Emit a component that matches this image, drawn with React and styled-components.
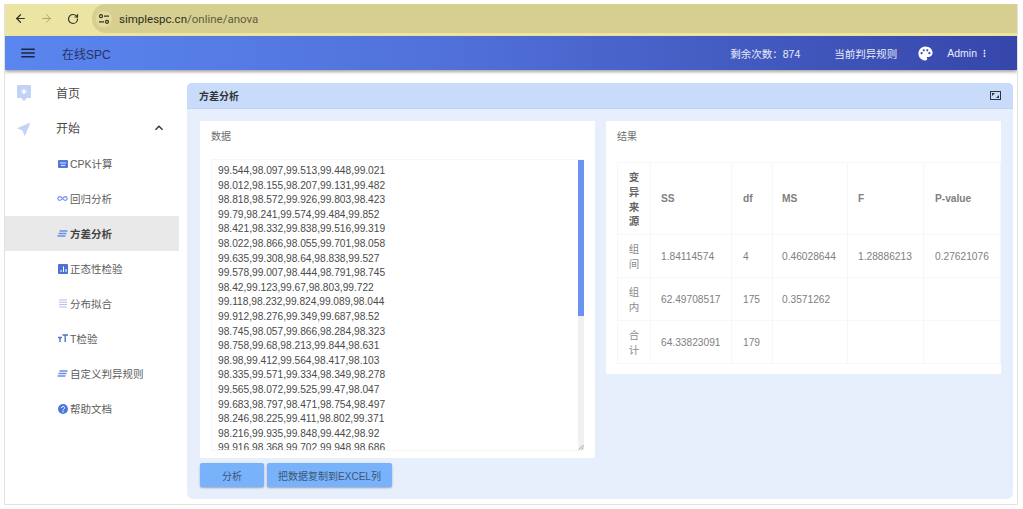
import styled, { createGlobalStyle } from "styled-components";
import { ArrowLeft, ArrowRight, RotateCw, Infinity as InfinityIcon } from "lucide-react";
import { MdMenu, MdPalette, MdMoreVert, MdExpandLess, MdNavigation } from "react-icons/md";

const GlobalStyle = createGlobalStyle`
  html, body {
    margin: 0;
    padding: 0;
    background: #ffffff;
    font-family: "Liberation Sans", "Noto Sans CJK SC", sans-serif;
  }
`;

const Frame = styled.div`
  box-sizing: border-box;
  width: 1014px;
  height: 501px;
  margin: 4px 0 0 4px;
  border: 1px solid #e2e2e2;
  border-top: 0;
  display: flex;
  flex-direction: column;
  overflow: hidden;
`;

const BrowserBar = styled.div`
  height: 32px;
  flex: none;
  box-sizing: border-box;
  background: #ece4a2;
  border-bottom: 3px solid #eee6a0;
  display: flex;
  align-items: center;
  padding-left: 2px;
  color: #3c3c30;
`;

const NavButton = styled.span`
  width: 26.5px;
  display: flex;
  justify-content: center;
  color: ${(p) => (p.$muted ? "#9c9878" : "#33332a")};
`;

const AddressPill = styled.div`
  flex: 1;
  height: 29px;
  margin-left: 5.5px;
  border-radius: 14px 0 0 14px;
  background: #d6cf90;
  display: flex;
  align-items: center;
  gap: 7px;
  padding-left: 4px;
  font-family: "Roboto", sans-serif;
  font-size: 11.5px;
  color: #5f5c45;
`;

const SiteIcon = styled.span`
  width: 16px;
  height: 16px;
  border-radius: 50%;
  background: #e4dc9c;
  display: flex;
  align-items: center;
  justify-content: center;
  color: #33332a;
`;

const Host = styled.span`
  color: #2e2d22;
`;

const Header = styled.header`
  height: 34px;
  flex: none;
  background: linear-gradient(90deg, #5a86f0 0%, #5070d8 45%, #3646aa 100%);
  box-shadow: 0 2px 3px rgba(60, 60, 60, 0.45);
  display: flex;
  align-items: center;
  color: #e8ecfa;
  font-size: 10.5px;
  position: relative;
  z-index: 1;
`;

const MenuButton = styled.span`
  width: 46px;
  padding-left: 14px;
  box-sizing: border-box;
  display: flex;
  color: #1d2540;
`;

const Brand = styled.span`
  margin-left: 11px;
  font-size: 12px;
  color: #26335f;
`;

const HeaderRight = styled.div`
  margin-left: auto;
  display: flex;
  align-items: center;
  padding-right: 27px;
`;

const Count = styled.span`
  margin-right: 34px;
`;

const Rule = styled.span`
  margin-right: 20px;
`;

const Admin = styled.span`
  margin-left: 13px;
  display: flex;
  align-items: center;
  gap: 2px;
`;

const Content = styled.div`
  flex: 1;
  display: flex;
  min-height: 0;
`;

const Sidebar = styled.nav`
  width: 174px;
  flex: none;
  padding-top: 5px;
  margin-right: 8px;
`;

const NavItem = styled.div`
  height: 35px;
  display: flex;
  align-items: center;
  padding-left: 12px;
  font-size: 12px;
  color: #4a4a4a;
`;

const OpenItem = styled(NavItem)`
  margin-bottom: 1px;
`;

const NavIcon = styled.span`
  width: 39px;
  display: flex;
  color: #c3d3f8;
`;

const Chevron = styled.span`
  margin-left: 71px;
  display: flex;
  color: #333333;
`;

const SubItem = styled.div`
  height: 35px;
  display: flex;
  align-items: center;
  padding-left: 52px;
  gap: 2px;
  font-size: 10.5px;
  color: ${(p) => (p.$active ? "#444444" : "#5c5c5c")};
  background: ${(p) => (p.$active ? "#e9e9e9" : "transparent")};
  font-weight: ${(p) => (p.$active ? "bold" : "normal")};
`;

const SubIcon = styled.span`
  width: 11px;
  height: 11px;
  display: flex;
  align-items: center;
  justify-content: center;
  color: #6a8ee6;
`;

const Panel = styled.main`
  width: 826px;
  height: 416px;
  margin-top: 13px;
  background: #e7effd;
  border-radius: 5px 5px 6px 6px;
  overflow: hidden;
`;

const PanelHeader = styled.div`
  height: 26px;
  box-sizing: border-box;
  background: #c9dbfa;
  border-bottom: 1px solid #bfd2f5;
  display: flex;
  align-items: center;
  justify-content: space-between;
  padding: 0 12px;
  font-size: 10px;
  font-weight: bold;
  color: #333333;
`;

const PanelBody = styled.div`
  display: grid;
  grid-template-columns: 395px 395px;
  column-gap: 11px;
  padding: 12px 12px 0 13px;
  align-items: start;
`;

const DataColumn = styled.div`
  display: flex;
  flex-direction: column;
`;

const Card = styled.section`
  background: #ffffff;
  box-sizing: border-box;
  padding: 10px 11px 7px;
  height: ${(p) => p.$height}px;
  display: flex;
  flex-direction: column;
`;

const CardTitle = styled.div`
  font-size: 10px;
  line-height: 12px;
  height: ${(p) => p.$height}px;
  color: #6c6c6c;
`;

const DataBox = styled.div`
  flex: 1;
  min-height: 0;
  border: 1px solid #f6f6f6;
  border-right: 0;
  position: relative;
  overflow: hidden;
  padding: 4px 0 0 6px;
  font-size: 10.2px;
  line-height: 14.6px;
  color: #4a4a4a;
`;

const ScrollTrack = styled.div`
  position: absolute;
  top: 0;
  right: 0;
  bottom: 0;
  width: 6px;
  background: #f0f0f0;
`;

const ScrollThumb = styled.div`
  width: 6px;
  height: 156px;
  background: #6b93ee;
`;

const ResizeGrip = styled.svg`
  position: absolute;
  right: 0;
  bottom: 0;
  width: 6px;
  height: 6px;
`;

const Actions = styled.div`
  display: flex;
  gap: 3px;
  margin-top: 5px;
`;

const Button = styled.button`
  height: 24px;
  width: ${(p) => p.$width}px;
  border: 0;
  padding: 0;
  border-radius: 2px;
  background: #78b2fb;
  box-shadow: 0 1px 2px rgba(60, 70, 90, 0.45);
  font-family: inherit;
  font-size: 10px;
  color: #3d5673;
`;

const ResultTable = styled.table`
  border-collapse: collapse;
  table-layout: fixed;
  width: 383px;
  font-size: 10.2px;
  color: #808080;
  td, th {
    border: 1px solid #f7f7f7;
    padding: 0 0 0 11px;
    text-align: left;
  }
  td:nth-child(2), th:nth-child(2), td:nth-child(5), th:nth-child(5) {
    padding-left: 10px;
  }
  td:nth-child(4), th:nth-child(4) {
    padding-left: 9px;
  }
  th {
    font-weight: bold;
  }
`;

const SourceCell = styled.td`
  && {
    padding: 2px 0 0;
    text-align: center;
    font-size: 10.5px;
    font-weight: ${(p) => (p.$head ? "bold" : "normal")};
    color: ${(p) => (p.$head ? "#666666" : "#8c8c8c")};
    line-height: 14.7px;
  }
`;

const Row = styled.tr`
  height: ${(p) => p.$height}px;
`;

const dataLines = [
  "99.544,98.097,99.513,99.448,99.021",
  "98.012,98.155,98.207,99.131,99.482",
  "98.818,98.572,99.926,99.803,98.423",
  "99.79,98.241,99.574,99.484,99.852",
  "98.421,98.332,99.838,99.516,99.319",
  "98.022,98.866,98.055,99.701,98.058",
  "99.635,99.308,98.64,98.838,99.527",
  "99.578,99.007,98.444,98.791,98.745",
  "98.42,99.123,99.67,98.803,99.722",
  "99.118,98.232,99.824,99.089,98.044",
  "99.912,98.276,99.349,99.687,98.52",
  "98.745,98.057,99.866,98.284,98.323",
  "98.758,99.68,98.213,99.844,98.631",
  "98.98,99.412,99.564,98.417,98.103",
  "98.335,99.571,99.334,98.349,98.278",
  "99.565,98.072,99.525,99.47,98.047",
  "99.683,98.797,98.471,98.754,98.497",
  "98.246,98.225,99.411,98.802,99.371",
  "98.216,99.935,99.848,99.442,98.92",
  "99.916,98.368,99.702,99.948,98.686",
];

const rows = [
  { source: ["组", "间"], values: ["1.84114574", "4", "0.46028644", "1.28886213", "0.27621076"] },
  { source: ["组", "内"], values: ["62.49708517", "175", "0.3571262", "", ""] },
  { source: ["合", "计"], values: ["64.33823091", "179", "", "", ""] },
];

const columns = [33, 81, 41, 75, 76, 77];

function Stacked({ chars }) {
  return chars.map((c) => <div key={c}>{c}</div>);
}

function TuneIcon() {
  return (
    <svg width="12" height="10" viewBox="0 0 12 10" fill="none" stroke="#33332a" strokeWidth="1.2">
      <circle cx="3" cy="2.2" r="1.5" />
      <path d="M6 2.2h5M1 7.8h5" />
      <circle cx="9" cy="7.8" r="1.5" />
    </svg>
  );
}

function HomeIcon() {
  return (
    <svg width="14" height="16" viewBox="0 0 14 16">
      <path d="M1 0h12a1 1 0 0 1 1 1v11a1 1 0 0 1-1 1h-3l-3 3-3-3H1a1 1 0 0 1-1-1V1a1 1 0 0 1 1-1z" fill="#c3d3f8" />
      <path d="M7 4v5M4.5 6.5h5" stroke="#fff" strokeWidth="1.6" />
    </svg>
  );
}

function KeyboardIcon() {
  return (
    <svg width="10" height="8" viewBox="0 0 10 8">
      <rect width="10" height="8" rx="1" fill="#5579d6" />
      <path d="M2 3h6M3 5.5h4" stroke="#dfe8fb" strokeWidth="1" />
    </svg>
  );
}

function SlantLines() {
  return (
    <svg width="11" height="7" viewBox="0 0 11 7">
      <path d="M2.5 1H10.5M1.5 3.5H9.5M.5 6H8.5" stroke="#6a8ee6" strokeWidth="1.3" />
    </svg>
  );
}

function ChartIcon() {
  return (
    <svg width="10" height="10" viewBox="0 0 10 10">
      <rect width="10" height="10" rx="1" fill="#4c72d6" />
      <path d="M3 8V6M5.5 8V2.5M8 8V5" stroke="#fff" strokeWidth="1" />
    </svg>
  );
}

function ListIcon() {
  return (
    <svg width="10" height="9" viewBox="0 0 10 9">
      <path d="M1 1h8M1 3.3h8M1 5.6h8M1 8h8" stroke="#aebfec" strokeWidth="1" />
    </svg>
  );
}

function FontSizeIcon() {
  return (
    <svg width="10" height="9" viewBox="0 0 10 9">
      <path d="M0 3.5h4M2 3.5V8M4.5 1H10M7.2 1v7" stroke="#4c72c9" strokeWidth="1.4" fill="none" />
    </svg>
  );
}

function HelpIcon() {
  return (
    <svg width="10" height="10" viewBox="0 0 10 10">
      <circle cx="5" cy="5" r="5" fill="#4c78dc" />
      <path d="M3.5 4a1.5 1.5 0 1 1 2.3 1.2C5.2 5.6 5 5.8 5 6.4" stroke="#fff" strokeWidth="1" fill="none" />
      <circle cx="5" cy="7.8" r=".7" fill="#fff" />
    </svg>
  );
}

function ExpandIcon() {
  return (
    <svg width="11" height="9" viewBox="0 0 11 9">
      <rect x=".5" y=".5" width="10" height="8" fill="none" stroke="#333" strokeWidth="1" />
      <path d="M2 2h3L2 5zM9 7H6l3-3z" fill="#333" />
    </svg>
  );
}

const subItems = [
  { label: "CPK计算", icon: <KeyboardIcon /> },
  { label: "回归分析", icon: <InfinityIcon size={13} strokeWidth={2.4} /> },
  { label: "方差分析", icon: <SlantLines />, active: true },
  { label: "正态性检验", icon: <ChartIcon /> },
  { label: "分布拟合", icon: <ListIcon /> },
  { label: "T检验", icon: <FontSizeIcon /> },
  { label: "自定义判异规则", icon: <SlantLines /> },
  { label: "帮助文档", icon: <HelpIcon /> },
];

export default function App() {
  return (
    <>
      <GlobalStyle />
      <Frame>
        <BrowserBar>
          <NavButton><ArrowLeft size={13} strokeWidth={2.2} /></NavButton>
          <NavButton $muted><ArrowRight size={13} strokeWidth={1.6} /></NavButton>
          <NavButton><RotateCw size={12} strokeWidth={2.4} /></NavButton>
          <AddressPill>
            <SiteIcon><TuneIcon /></SiteIcon>
            <span><Host>simplespc.cn</Host>/online/anova</span>
          </AddressPill>
        </BrowserBar>
        <Header>
          <MenuButton><MdMenu size={18} /></MenuButton>
          <Brand>在线SPC</Brand>
          <HeaderRight>
            <Count>剩余次数：874</Count>
            <Rule>当前判异规则</Rule>
            <MdPalette size={17} color="#fff" />
            <Admin>Admin <MdMoreVert size={11} /></Admin>
          </HeaderRight>
        </Header>
        <Content>
          <Sidebar>
            <NavItem><NavIcon><HomeIcon /></NavIcon>首页</NavItem>
            <OpenItem>
              <NavIcon><MdNavigation size={17} style={{ transform: "rotate(45deg)" }} /></NavIcon>
              开始
              <Chevron><MdExpandLess size={16} /></Chevron>
            </OpenItem>
            {subItems.map((item) => (
              <SubItem key={item.label} $active={item.active}>
                <SubIcon>{item.icon}</SubIcon>
                {item.label}
              </SubItem>
            ))}
          </Sidebar>
          <Panel>
            <PanelHeader>
              方差分析
              <ExpandIcon />
            </PanelHeader>
            <PanelBody>
              <DataColumn>
                <Card $height={337}>
                  <CardTitle $height={28}>数据</CardTitle>
                  <DataBox>
                    {dataLines.map((line) => <div key={line}>{line}</div>)}
                    <ScrollTrack>
                      <ScrollThumb />
                      <ResizeGrip viewBox="0 0 6 6">
                        <path d="M1 5.5L5.5 1M3.5 5.5L5.5 3.5" stroke="#777" strokeWidth=".7" />
                      </ResizeGrip>
                    </ScrollTrack>
                  </DataBox>
                </Card>
                <Actions>
                  <Button $width={64}>分析</Button>
                  <Button $width={125}>把数据复制到EXCEL列</Button>
                </Actions>
              </DataColumn>
              <Card $height={253}>
                <CardTitle $height={31}>结果</CardTitle>
                <ResultTable>
                  <colgroup>
                    {columns.map((w, i) => <col key={i} style={{ width: w }} />)}
                  </colgroup>
                  <tbody>
                    <Row $height={72}>
                      <SourceCell $head as="th"><Stacked chars={["变", "异", "来", "源"]} /></SourceCell>
                      <th>SS</th>
                      <th>df</th>
                      <th>MS</th>
                      <th>F</th>
                      <th>P-value</th>
                    </Row>
                    {rows.map((row) => (
                      <Row $height={43} key={row.source.join("")}>
                        <SourceCell><Stacked chars={row.source} /></SourceCell>
                        {row.values.map((v, i) => <td key={i}>{v}</td>)}
                      </Row>
                    ))}
                  </tbody>
                </ResultTable>
              </Card>
            </PanelBody>
          </Panel>
        </Content>
      </Frame>
    </>
  );
}
